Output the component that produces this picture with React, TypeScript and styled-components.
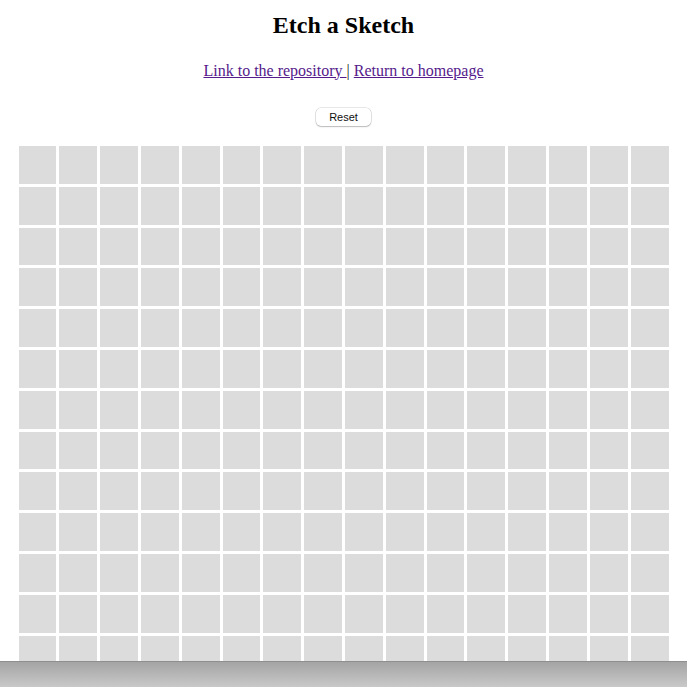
import React from "react";
import styled, { createGlobalStyle } from "styled-components";

const Global = createGlobalStyle`
  html, body { margin: 0; padding: 0; background: #ffffff; }
  body { font-family: "Liberation Serif", "Times New Roman", serif; color: #000; }
`;

const Page = styled.main`
  padding: 12px 8px 40px;
  display: flex;
  flex-direction: column;
  align-items: center;
`;

const Title = styled.h1`
  margin: 0;
  font-size: 24px;
  line-height: 27.6px;
  font-weight: 700;
  text-align: center;
`;

const Links = styled.p`
  margin: 22px 0 0;
  font-size: 16px;
  line-height: 18.4px;
  text-align: center;
  color: #222;
`;

const Link = styled.a`
  color: #551a8b;
  text-decoration: underline;
`;

const ResetButton = styled.button`
  margin-top: 28px;
  width: 55px;
  height: 18px;
  padding: 0;
  border: none;
  border-radius: 5px;
  background: #ffffff;
  box-shadow: 0 0 0 0.5px rgba(0, 0, 0, 0.18), 0 1px 1.5px rgba(0, 0, 0, 0.2);
  font-family: "Liberation Sans", Arial, sans-serif;
  font-size: 11px;
  color: #111;
  cursor: pointer;
`;

const Grid = styled.div`
  margin-top: 20px;
  width: 650px;
  display: grid;
  grid-template-columns: repeat(16, 1fr);
  grid-auto-rows: 37.8px;
  gap: 3px;
`;

const Cell = styled.div`
  background: #dcdcdc;
`;

const BottomBar = styled.div`
  position: fixed;
  left: 0;
  right: 0;
  bottom: 0;
  height: 25px;
  border-top: 1px solid #8f8f8f;
  background: linear-gradient(to bottom, #a4a4a4, #c9c9c9);
`;

export default function App() {
  const cells = Array.from({ length: 256 }, (_, i) => i);
  return (
    <>
      <Global />
      <Page>
        <Title>Etch a Sketch</Title>
        <Links>
          <Link href="#">Link to the repository </Link>| <Link href="#">Return to homepage</Link>
        </Links>
        <ResetButton type="button">Reset</ResetButton>
        <Grid>
          {cells.map((i) => (
            <Cell key={i} />
          ))}
        </Grid>
      </Page>
      <BottomBar />
    </>
  );
}
